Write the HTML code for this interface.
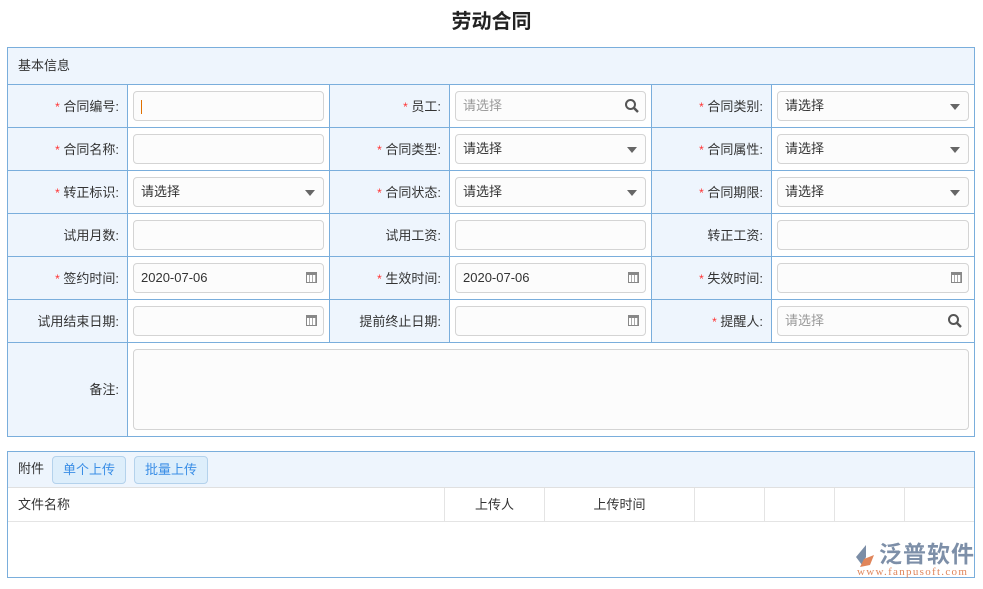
<!DOCTYPE html>
<html><head><meta charset="utf-8">
<style>
*{box-sizing:border-box;margin:0;padding:0}
body{width:983px;height:589px;background:#fff;font-family:"Liberation Sans","Noto Sans CJK SC",sans-serif;font-size:13px;color:#333;position:relative;overflow:hidden}
.a{position:absolute}
.title{left:0;width:983px;top:5px;text-align:center;font-size:20px;font-weight:bold;color:#222}
.box{border:1px solid #7aaedc}
.l{position:absolute;height:43px;line-height:43px;text-align:right;padding-right:8px;background:#eef5fd;border-right:1px solid #7aaedc;border-bottom:1px solid #7aaedc}
.c{position:absolute;height:43px;border-right:1px solid #7aaedc;border-bottom:1px solid #7aaedc;background:#fff}
.s{color:#f33;font-size:12px}
.in{position:absolute;height:30px;border:1px solid #d4d4d4;border-radius:4px;background:#fcfcfc;line-height:28px;padding-left:7px;color:#333}
.ph{color:#999}
.arr{position:absolute;right:8px;top:12px;width:0;height:0;border-left:5px solid transparent;border-right:5px solid transparent;border-top:6px solid #666}
.cal{position:absolute;right:6px;top:8px;width:11px;height:11px;border:1px solid #888;border-top-width:3px;background:repeating-linear-gradient(90deg,#fff 0 2px,#aaa 2px 3px)}
.mag{position:absolute;right:5px;top:6px}
</style></head><body>
<div class="a title">劳动合同</div>
<div class="a box" style="left:7px;top:47px;width:968px;height:390px;background:#fff"></div>
<div class="a" style="left:8px;top:48px;width:966px;height:37px;background:#eef5fd;border-bottom:1px solid #7aaedc;line-height:36px;padding-left:10px">基本信息</div>

<div class="l" style="left:8px;top:85px;width:120px"><span class="s">*</span> 合同编号:</div>
<div class="c" style="left:128px;top:85px;width:202px"></div>
<div class="in" style="left:133px;top:91px;width:191px"><span style="display:inline-block;width:1px;height:14px;background:#e07000;vertical-align:middle"></span></div>
<div class="l" style="left:330px;top:85px;width:120px"><span class="s">*</span> 员工:</div>
<div class="c" style="left:450px;top:85px;width:202px"></div>
<div class="in ph" style="left:455px;top:91px;width:191px">请选择<svg class="mag" width="16" height="16" viewBox="0 0 16 16"><circle cx="6.5" cy="6.5" r="4.5" fill="none" stroke="#555" stroke-width="2"/><path d="M10 10l4 4" stroke="#555" stroke-width="2.4"/></svg></div>
<div class="l" style="left:652px;top:85px;width:120px"><span class="s">*</span> 合同类别:</div>
<div class="c" style="left:772px;top:85px;width:202px;border-right:0"></div>
<div class="in" style="left:777px;top:91px;width:192px">请选择<i class="arr"></i></div>

<div class="l" style="left:8px;top:128px;width:120px"><span class="s">*</span> 合同名称:</div>
<div class="c" style="left:128px;top:128px;width:202px"></div>
<div class="in" style="left:133px;top:134px;width:191px"></div>
<div class="l" style="left:330px;top:128px;width:120px"><span class="s">*</span> 合同类型:</div>
<div class="c" style="left:450px;top:128px;width:202px"></div>
<div class="in" style="left:455px;top:134px;width:191px">请选择<i class="arr"></i></div>
<div class="l" style="left:652px;top:128px;width:120px"><span class="s">*</span> 合同属性:</div>
<div class="c" style="left:772px;top:128px;width:202px;border-right:0"></div>
<div class="in" style="left:777px;top:134px;width:192px">请选择<i class="arr"></i></div>

<div class="l" style="left:8px;top:171px;width:120px"><span class="s">*</span> 转正标识:</div>
<div class="c" style="left:128px;top:171px;width:202px"></div>
<div class="in" style="left:133px;top:177px;width:191px">请选择<i class="arr"></i></div>
<div class="l" style="left:330px;top:171px;width:120px"><span class="s">*</span> 合同状态:</div>
<div class="c" style="left:450px;top:171px;width:202px"></div>
<div class="in" style="left:455px;top:177px;width:191px">请选择<i class="arr"></i></div>
<div class="l" style="left:652px;top:171px;width:120px"><span class="s">*</span> 合同期限:</div>
<div class="c" style="left:772px;top:171px;width:202px;border-right:0"></div>
<div class="in" style="left:777px;top:177px;width:192px">请选择<i class="arr"></i></div>

<div class="l" style="left:8px;top:214px;width:120px">试用月数:</div>
<div class="c" style="left:128px;top:214px;width:202px"></div>
<div class="in" style="left:133px;top:220px;width:191px"></div>
<div class="l" style="left:330px;top:214px;width:120px">试用工资:</div>
<div class="c" style="left:450px;top:214px;width:202px"></div>
<div class="in" style="left:455px;top:220px;width:191px"></div>
<div class="l" style="left:652px;top:214px;width:120px">转正工资:</div>
<div class="c" style="left:772px;top:214px;width:202px;border-right:0"></div>
<div class="in" style="left:777px;top:220px;width:192px"></div>

<div class="l" style="left:8px;top:257px;width:120px"><span class="s">*</span> 签约时间:</div>
<div class="c" style="left:128px;top:257px;width:202px"></div>
<div class="in" style="left:133px;top:263px;width:191px">2020-07-06<i class="cal"></i></div>
<div class="l" style="left:330px;top:257px;width:120px"><span class="s">*</span> 生效时间:</div>
<div class="c" style="left:450px;top:257px;width:202px"></div>
<div class="in" style="left:455px;top:263px;width:191px">2020-07-06<i class="cal"></i></div>
<div class="l" style="left:652px;top:257px;width:120px"><span class="s">*</span> 失效时间:</div>
<div class="c" style="left:772px;top:257px;width:202px;border-right:0"></div>
<div class="in" style="left:777px;top:263px;width:192px"><i class="cal"></i></div>

<div class="l" style="left:8px;top:300px;width:120px">试用结束日期:</div>
<div class="c" style="left:128px;top:300px;width:202px"></div>
<div class="in" style="left:133px;top:306px;width:191px"><i class="cal"></i></div>
<div class="l" style="left:330px;top:300px;width:120px">提前终止日期:</div>
<div class="c" style="left:450px;top:300px;width:202px"></div>
<div class="in" style="left:455px;top:306px;width:191px"><i class="cal"></i></div>
<div class="l" style="left:652px;top:300px;width:120px"><span class="s">*</span> 提醒人:</div>
<div class="c" style="left:772px;top:300px;width:202px;border-right:0"></div>
<div class="in ph" style="left:777px;top:306px;width:192px">请选择<svg class="mag" width="16" height="16" viewBox="0 0 16 16"><circle cx="6.5" cy="6.5" r="4.5" fill="none" stroke="#555" stroke-width="2"/><path d="M10 10l4 4" stroke="#555" stroke-width="2.4"/></svg></div>

<div class="l" style="left:8px;top:343px;width:120px;height:93px;line-height:93px;border-bottom:0">备注:</div>
<div class="in" style="left:133px;top:349px;width:836px;height:81px"></div>

<div class="a box" style="left:7px;top:451px;width:968px;height:127px"></div>
<div class="a" style="left:8px;top:452px;width:966px;height:36px;background:#eef5fd;border-bottom:1px solid #e0e0e0"></div>
<div class="a" style="left:18px;top:460px;line-height:18px">附件</div>
<div class="a" style="left:52px;top:456px;width:74px;height:28px;border:1px solid #b4d2ec;border-radius:4px;background:#ddeefb;color:#3a8ee6;line-height:26px;text-align:center">单个上传</div>
<div class="a" style="left:134px;top:456px;width:74px;height:28px;border:1px solid #b4d2ec;border-radius:4px;background:#ddeefb;color:#3a8ee6;line-height:26px;text-align:center">批量上传</div>
<div class="a" style="left:8px;top:488px;width:966px;height:34px;border-bottom:1px solid #e4e4e4"></div>
<div class="a" style="left:18px;top:488px;line-height:33px">文件名称</div>
<div class="a" style="left:444px;top:488px;width:100px;height:33px;border-left:1px solid #e4e4e4;line-height:33px;text-align:center">上传人</div>
<div class="a" style="left:544px;top:488px;width:150px;height:33px;border-left:1px solid #e4e4e4;line-height:33px;text-align:center">上传时间</div>
<div class="a" style="left:694px;top:488px;width:70px;height:33px;border-left:1px solid #e4e4e4"></div>
<div class="a" style="left:764px;top:488px;width:70px;height:33px;border-left:1px solid #e4e4e4"></div>
<div class="a" style="left:834px;top:488px;width:70px;height:33px;border-left:1px solid #e4e4e4"></div>
<div class="a" style="left:904px;top:488px;width:70px;height:33px;border-left:1px solid #e4e4e4"></div>

<svg class="a" style="left:852px;top:543px" width="26" height="26" viewBox="0 0 26 26"><path d="M14 2 L4 14 L10 22 L14 14 Z" fill="#7b8da6"/><path d="M12 16 L22 12 L18 22 L8 24 Z" fill="#e0855a"/></svg>
<div class="a" style="left:879px;top:541px;font-size:23px;font-weight:bold;color:#7d8fa8;letter-spacing:1px;line-height:26px">泛普软件</div>
<div class="a" style="left:857px;top:566px;font-family:'Liberation Serif',serif;font-size:11px;color:#e0855a;line-height:12px;letter-spacing:1.3px">www.fanpusoft.com</div>
</body></html>
